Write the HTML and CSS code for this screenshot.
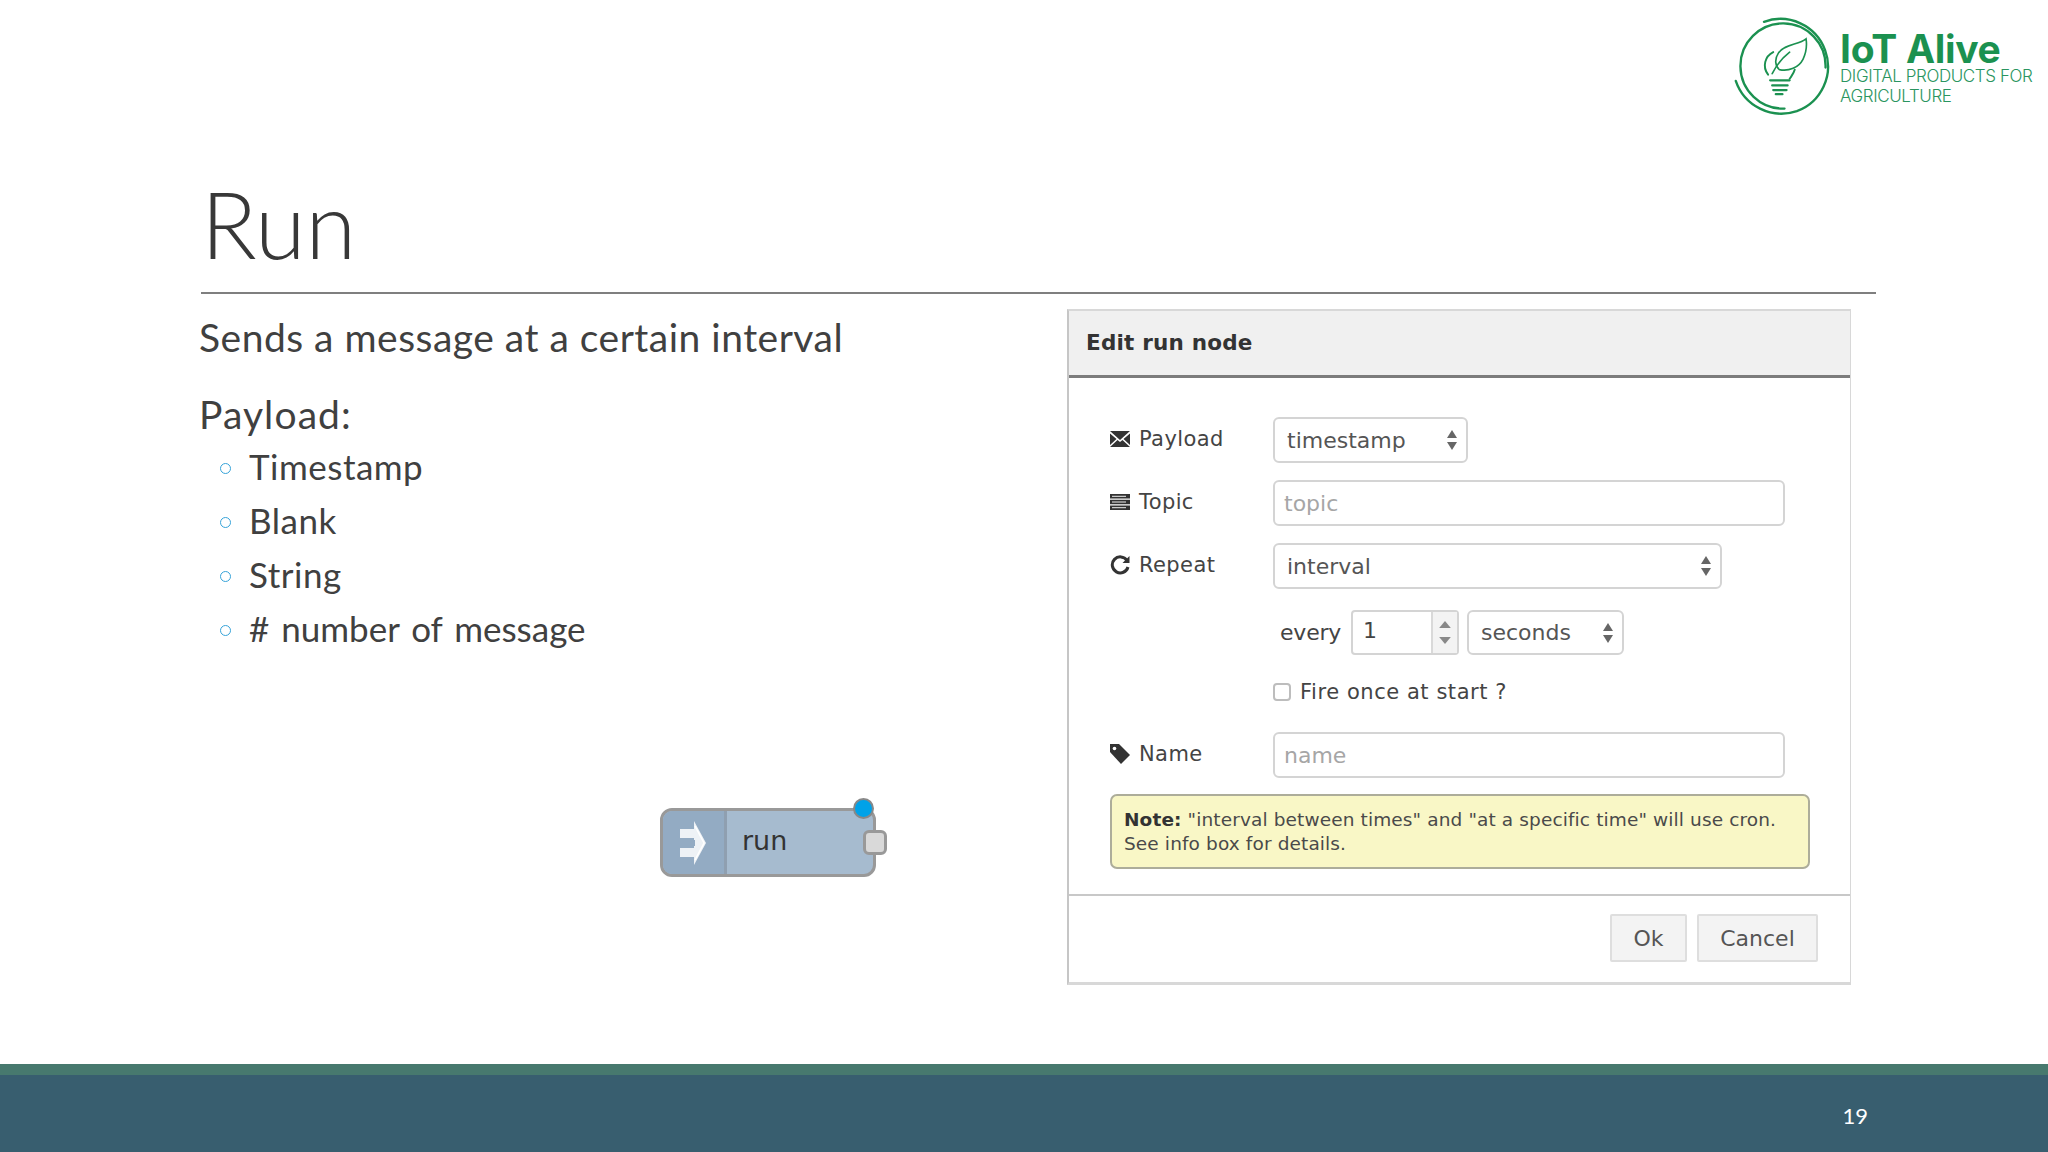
FILE: index.html
```html
<!DOCTYPE html>
<html lang="en">
<head>
<meta charset="utf-8">
<title>Run</title>
<link rel="stylesheet" href="styles.css">
</head>
<body>
<div class="slide">
  <main class="main">
    <div class="top">
      <div class="logo">
        <svg class="logo-mark" viewBox="0 0 115 110" fill="none" stroke="#1b9150" stroke-width="2.3" stroke-linecap="round">
          <path d="M38 11.5A46 46 0 1 1 70 98.5A47 47 0 0 1 10.5 69"/>
          <path d="M98 56A41.5 41.5 0 1 0 58 96"/>
          <path d="M79 28C72 34 58 33 52 42C48 48 49 55 53 58C62 60 72 56 76 48C79 42 80 35 79 28Z" stroke-width="1.6"/>
          <path d="M46 62C50 54 54 48 63 41" stroke-width="1.6"/>
          <path d="M47 41C39 45 36 55 42 63" stroke-width="1.9"/>
          <path d="M68 58C67 62 65 64 63 67" stroke-width="1.9"/>
          <path d="M44 68.5H63M46 73.5H61M47 78H60M49.500 82H56" stroke-width="2.2"/>
        </svg>
        <div class="logo-text">
          <div class="logo-name">IoT Alive</div>
          <div class="logo-sub">DIGITAL PRODUCTS FOR AGRICULTURE</div>
        </div>
      </div>
    </div>
    <div class="head">
      <h1 class="title">Run</h1>
    </div>
    <div class="content">
      <section class="left">
        <p class="lead">Sends a message at a certain interval</p>
        <p class="lead payload">Payload:</p>
        <ul class="list">
          <li>Timestamp</li>
          <li>Blank</li>
          <li>String</li>
          <li class="wide">#&nbsp;number of message</li>
        </ul>
        <div class="node">
          <div class="node-icon">
            <svg viewBox="0 0 30 44" width="30" height="44" fill="#fff">
              <path d="M15 0L27 22L15 44V36H1V27H15V17H1V8H15Z" fill="#eef2f6"/>
              <path d="M16 5L25 22L16 39" fill="none" stroke="#fff" stroke-width="1.500"/>
              <path d="M3 19H16V25H3Z" fill="#93abc3"/>
            </svg>
          </div>
          <div class="node-label">run</div>
          <span class="node-status"></span>
          <span class="node-port"></span>
        </div>
      </section>
      <section class="dialog">
        <header class="dialog-head">Edit run node</header>
        <div class="dialog-body">
          <div class="row">
            <label class="label">
              <svg class="ico" viewBox="0 0 20 16"><path d="M0 0H20L10 9ZM0 2.500V14L6.500 8ZM20 2.500V14L13.500 8ZM0 16L7.500 9L10 11L12.500 9L20 16Z" fill="#333"/></svg>
              Payload
            </label>
            <div class="field select w-195"><span>timestamp</span><svg class="arrows" viewBox="0 0 10 20"><path d="M5 0L10 8H0ZM5 20L0 12H10Z"/></svg></div>
          </div>
          <div class="row mt-17">
            <label class="label">
              <svg class="ico" viewBox="0 0 20 16"><path d="M0 0H20V4.500H0ZM0 5.700H20V10.200H0ZM0 11.500H20V16H0Z" fill="#333"/><path d="M2 2.300H16M2 8H16M2 13.700H16" stroke="#eee" stroke-width="1"/></svg>
              Topic
            </label>
            <div class="field ph w-512">topic</div>
          </div>
          <div class="row mt-17">
            <label class="label">
              <svg class="ico" viewBox="0 0 20 20"><path d="M17 5.500A8 8 0 1 0 18 12" fill="none" stroke="#333" stroke-width="3"/><path d="M19.500 1V8H12.500Z" fill="#333"/></svg>
              Repeat
            </label>
            <div class="field select w-449"><span>interval</span><svg class="arrows" viewBox="0 0 10 20"><path d="M5 0L10 8H0ZM5 20L0 12H10Z"/></svg></div>
          </div>
          <div class="row sub mt-21">
            <span class="every">every</span>
            <div class="spin">
              <span class="spin-val">1</span>
              <span class="spin-btns">
                <svg viewBox="0 0 10 6"><path d="M5 0L10 6H0Z"/></svg>
                <svg viewBox="0 0 10 6"><path d="M5 6L0 0H10Z"/></svg>
              </span>
            </div>
            <div class="field select short"><span>seconds</span><svg class="arrows" viewBox="0 0 10 20"><path d="M5 0L10 8H0ZM5 20L0 12H10Z"/></svg></div>
          </div>
          <div class="row check mt-28">
            <span class="box"></span>
            <span>Fire once at start ?</span>
          </div>
          <div class="row mt-31">
            <label class="label">
              <svg class="ico" viewBox="0 0 20 20"><path d="M0 0H9L20 11L11 20L0 8Z" fill="#333"/><circle cx="4.500" cy="4.500" r="1.800" fill="#fff"/></svg>
              Name
            </label>
            <div class="field ph w-512">name</div>
          </div>
          <div class="note">
            <b>Note:</b> "interval between times" and "at a specific time" will use cron.<br>See info box for details.
          </div>
        </div>
        <footer class="dialog-foot">
          <button class="btn ok" type="button">Ok</button>
          <button class="btn cancel" type="button">Cancel</button>
        </footer>
      </section>
    </div>
  </main>
  <footer class="foot">
    <span class="page">19</span>
  </footer>
</div>
</body>
</html>
```
FILE: styles.css
```css
* { box-sizing: border-box; }
html, body { margin: 0; padding: 0; background: #fff; }
.slide { width: 2048px; height: 1152px; display: flex; flex-direction: column; overflow: hidden; font-family: "Lato", sans-serif; color: #404040; }
.main { flex: 1; display: flex; flex-direction: column; min-height: 0; }

.top { height: 122px; padding-top: 10px; display: flex; justify-content: flex-end; }
.logo { display: flex; width: 323px; height: 113px; }
.logo-mark { width: 118px; height: 113px; flex: none; }
.logo-text { margin-left: -3px; width: 208px; padding-top: 21px; font-family: "Inter", sans-serif; color: #1b9150; }
.logo-name { font-size: 39px; font-weight: 700; line-height: 36px; letter-spacing: -0.300px; }
.logo-sub { font-size: 17px; font-weight: 300; line-height: 19.500px; color: #2a9560; letter-spacing: -0.400px; }

.head { margin-left: 201px; width: 1675px; height: 172px; border-bottom: 2px solid #7f7f7f; display: flex; }
.title { margin: 52px 0 0 0; font-size: 92px; font-weight: 300; line-height: 100px; color: #383838; letter-spacing: 0; }

.content { display: flex; flex: 1; min-height: 0; }
.left { width: 1067px; padding-left: 199px; flex: none; }
.lead { margin: 0; font-size: 39px; line-height: 46px; font-weight: 400; letter-spacing: 0.500px; }
.lead:first-child { margin-top: 20px; }
.payload { margin-top: 31px; letter-spacing: 1.100px; }
.list { list-style: none; margin: 2px 0 0 0; padding: 0 0 0 21px; }
.list li { display: flex; align-items: center; font-size: 35px; line-height: 54px; letter-spacing: 0.500px; }
.list li::before { content: ""; width: 9px; height: 9px; border: 1.500px solid #36a3d9; border-radius: 50%; margin-right: 18px; margin-top: 5px; flex: none; }
.list .wide { letter-spacing: 0; word-spacing: 3px; }

.node { position: relative; display: flex; width: 216px; height: 69px; margin: 153px 0 0 461px; background: #a6bbcf; border: 3px solid #999; border-radius: 12px; }
.node-icon { width: 64px; background: #93abc3; border-right: 3px solid #8f9fb0; border-radius: 9px 0 0 9px; display: flex; align-items: center; justify-content: center; flex: none; }
.node-label { padding-left: 15px; font-family: "DejaVu Sans", sans-serif; font-size: 27px; line-height: 60px; color: #333; }
.node-status { position: absolute; right: -1px; top: -13px; width: 21px; height: 21px; border-radius: 50%; background: #00a2e8; border: 2px solid #888; }
.node-port { position: absolute; right: -14px; top: 19px; width: 24px; height: 25px; border-radius: 6px; background: #d9d9d9; border: 3px solid #999; }

.dialog { width: 784px; height: 676px; margin-top: 15px; flex: none; border: 2px solid #d8d8d8; border-left-color: #c6c6c6; border-right-width: 1px; border-bottom-width: 3px; border-top-width: 2px; display: flex; flex-direction: column; font-family: "DejaVu Sans", sans-serif; color: #4a4a4a; background: #fff; }
.dialog-head { height: 67px; background: #f0f0f0; border-bottom: 3px solid #7c7c7c; font-size: 21.500px; font-weight: 700; color: #333; padding: 18px 0 0 17px; line-height: 28px; letter-spacing: 0.200px; }
.dialog-body { height: 518px; padding: 39px 0 0 41px; border-bottom: 2px solid #c8c8c8; }
.row { display: flex; align-items: center; }
.mt-17 { margin-top: 17px; }
.mt-21 { margin-top: 21px; }
.mt-28 { margin-top: 28px; }
.mt-31 { margin-top: 31px; }
.label { width: 163px; flex: none; display: flex; align-items: center; gap: 9px; font-size: 21px; color: #444; margin-top: -3px; letter-spacing: 0.400px; }
.ico { width: 20px; height: 20px; flex: none; }
.field { height: 46px; border: 2px solid #d4d4d4; border-radius: 6px; font-size: 22px; display: flex; align-items: center; padding: 0 12px; color: #555; background: #fff; }
.ph { color: #a6a6a6; padding: 0 9px; }
.select { justify-content: space-between; padding-right: 9px; }
.short { width: 157px; margin-left: 8px; height: 45px; }
.w-195 { width: 195px; }
.w-512 { width: 512px; }
.w-449 { width: 449px; }
.arrows { width: 10px; height: 20px; fill: #666; flex: none; }
.sub { height: 45px; padding-left: 170px; }
.every { font-size: 22px; width: 71px; color: #444; letter-spacing: -0.200px; }
.spin { width: 108px; height: 45px; border: 2px solid #d4d4d4; border-radius: 4px; display: flex; font-size: 22px; }
.spin-val { flex: 1; padding: 6px 0 0 10px; color: #444; }
.spin-btns { width: 26px; background: #f3f3f3; border-left: 2px solid #d9d9d9; display: flex; flex-direction: column; justify-content: space-around; align-items: center; padding: 5px 0; }
.spin-btns svg { width: 12px; height: 7px; fill: #888; }
.check { padding-left: 163px; font-size: 21px; height: 18px; color: #444; gap: 9px; letter-spacing: 0.550px; }
.box { width: 18px; height: 18px; border: 2px solid #bdbdbd; border-radius: 4px; background: #fff; flex: none; }
.note { width: 700px; height: 75px; margin-top: 16px; background: #f9f7c6; border: 2px solid #adad9a; border-radius: 7px; font-size: 18.500px; line-height: 23.500px; padding: 12px 0 0 12px; color: #4a4a4a; letter-spacing: 0.120px; }
.note b { color: #333; }
.dialog-foot { flex: 1; display: flex; justify-content: flex-end; gap: 10px; padding: 18px 32px 0 0; }
.btn { height: 48px; background: #f3f3f3; border: 2px solid #dedede; border-radius: 2px; font-family: "DejaVu Sans", sans-serif; font-size: 22px; color: #555; padding: 0; }
.ok { width: 77px; }
.cancel { width: 121px; }

.foot { height: 88px; flex: none; background: #385e6f; border-top: 11px solid #47796e; display: flex; justify-content: flex-end; }
.page { font-size: 22px; line-height: 27px; color: #fff; margin: 27px 180px 0 0; }
```
